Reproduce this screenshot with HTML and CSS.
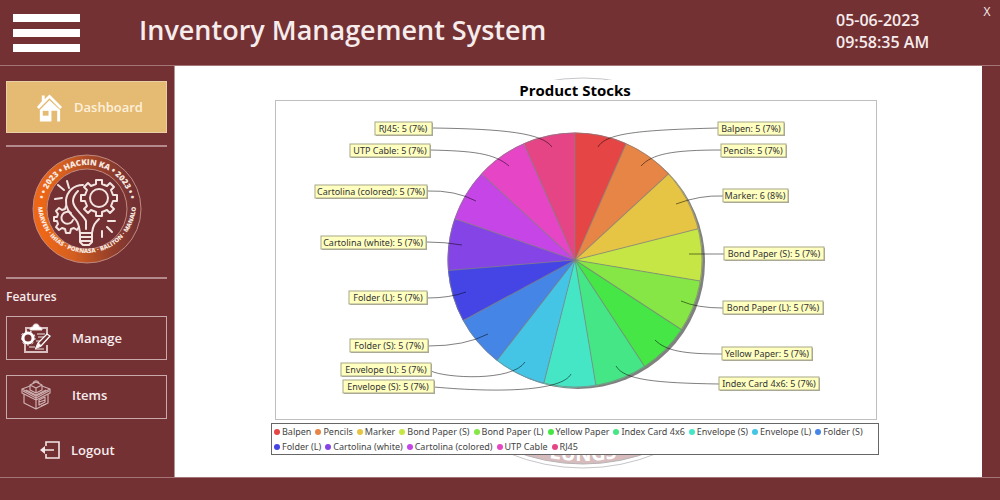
FILE: index.html
```
<!DOCTYPE html>
<html lang="en">
<head>
<meta charset="utf-8">
<meta name="viewport" content="width=device-width, initial-scale=1">
<title>Inventory Management System</title>
<link rel="stylesheet" href="styles.css">
</head>
<body>
<div class="app">
  <header class="topbar">
    <button class="menu-toggle" type="button" aria-label="Toggle menu"><span class="bar"></span><span class="bar"></span><span class="bar"></span></button>
    <h1 class="app-title">Inventory Management System</h1>
    <div class="clock"><span>05-06-2023</span><span>09:58:35 AM</span></div>
    <button class="close" type="button" aria-label="Close">X</button>
  </header>

  <nav class="sidebar">
    <button class="nav-item nav-active" type="button">
      <svg class="icon-home" viewBox="0 0 28 30" aria-hidden="true">
        <path d="M6 9V3h3v4l5-5 13 13-2 2L14 6 3 17l-2-2z" fill="#fff"/>
        <path d="M14 8l11 10v12h-3V19h-6v11H4V18z" fill="#fff"/>
        <path d="M7 19h6v5H7z" fill="#e5bb73"/>
      </svg>
      <span>Dashboard</span>
    </button>
    <hr class="rule">
    <svg class="logo" viewBox="0 0 110 110" role="img" aria-label="Hackin Ka 2023">
      <defs>
        <linearGradient id="ring" x1="0" x2="1" y1="0.5" y2="0.4">
          <stop offset="0" stop-color="#ee6716"/>
          <stop offset="0.3" stop-color="#d45f20"/>
          <stop offset="0.65" stop-color="#9d4329"/>
          <stop offset="1" stop-color="#733134"/>
        </linearGradient>
        <path id="arc-top" d="M11 55a44 44 0 0 1 88 0"/>
        <path id="arc-bottom" d="M6 50a49 49 0 0 0 98 0"/>
      </defs>
      <circle cx="55" cy="55" r="47" fill="none" stroke="url(#ring)" stroke-width="14"/>
      <circle cx="55" cy="55" r="54" fill="none" stroke="#c08a80" stroke-width="1"/>
      <circle cx="55" cy="55" r="40" fill="none" stroke="#c08a80" stroke-width="1"/>
      <text class="logo-text"><textPath href="#arc-top" startOffset="50%" text-anchor="middle">• • 2023 • HACKIN KA • 2023 • •</textPath></text>
      <text class="logo-text logo-names"><textPath href="#arc-bottom" startOffset="50%" text-anchor="middle">MARVEN · IHIAS · PORNASA · BALITON · MANALO</textPath></text>
      <g fill="none" stroke="#f3e4e2" stroke-width="2" stroke-linejoin="round" stroke-linecap="round">
        <path d="M51 31C41 31 35 38 34 46c-1 10 6 15 10 20 3 4 3 7 4 13h12c1-8 3-10 7-14M54 75v-8c-3-7-13-12-13-20 0-5 3-8 5-10"/>
        <path d="M48 79v9l3 3h6l3-3v-9M48 83h12M49 87h10"/>
        <circle cx="67" cy="44" r="9"/>
        <path d="M64 30v-4h6v4l5 2 3-3 4 4-3 3 2 5h4v6h-4l-2 5 3 3-4 4-3-3-5 2v4h-6v-4l-5-2-3 3-4-4 3-3-2-5h-4v-6h4l2-5-3-3 4-4 3 3z"/>
        <path d="M39 59a6 6 0 1 0 2 7"/>
        <path d="M34 52l-1 3-3 1-3-2-3 3 2 3-1 3h-3v4h3l1 3-2 3 3 3 3-2 3 1 1 4h4l1-4 3-1 3 2 2-3"/>
        <path d="M37 34l-2-7M32 36l-6-5M30 44l-7 1M70 77v6M75 73l5 5M76 67h7"/>
      </g>
    </svg>
    <hr class="rule">
    <h2 class="section-label">Features</h2>
    <button class="nav-item nav-boxed" type="button">
      <svg class="icon-feature" viewBox="0 0 30 30" aria-hidden="true" fill="none" stroke="#f3e6e6">
        <path d="M5 9V5h21v8M26 22v7H4v-9" stroke="#d9bfc0" stroke-width="2"/>
        <path d="M9 7c0-3 2-3 3-3 0-2 1-3 3-3s3 1 3 3c1 0 3 0 3 3z" fill="#fff"/>
        <path d="M16 11h8M17 14h6M15 18h4M14 26h9M8 24h6" stroke-width="1"/>
        <circle cx="7" cy="15" r="5" stroke="#fff" stroke-width="3"/>
        <circle cx="7" cy="15" r="7" stroke="#fff" stroke-width="1" stroke-dasharray="2 3"/>
        <path d="M15 25l2-5L26 11l3 2-9 10zM17 20l3 3" fill="#733134" stroke="#fff" stroke-width="1.3"/>
        <path d="M15 25l2-5 3 3z" fill="#fff"/>
      </svg>
      <span>Manage</span>
    </button>
    <button class="nav-item nav-boxed nav-second" type="button">
      <svg class="icon-feature" viewBox="0 0 30 30" aria-hidden="true" fill="none" stroke="#cfb0b1" stroke-width="1.2" stroke-linejoin="round">
        <path d="M9 6L1 9l14 7 14-7-8-3M1 9v4l14 7 14-7V9M15 16v4M3 14v9l12 6 12-6v-9M15 20v9"/>
        <path d="M9 5l6-3 6 3v5l-6 3-6-3zM9 5l6 3 6-3M15 8v5M12 3c1-3 5-3 6 0M5 10l10 5 10-5M2 11l13 7 13-7"/>
        <path d="M18 20l6-3v5l-6 3zM20 26l5-2M18 22l6-2"/>
      </svg>
      <span>Items</span>
    </button>
    <button class="nav-item nav-plain" type="button">
      <svg class="icon-logout" viewBox="0 0 20 20" aria-hidden="true" fill="none" stroke="#f3e6e6" stroke-width="1.6">
        <path d="M6 6V2h13v16H6v-4M2 10h12"/>
        <path d="M5 6l-5 4 5 4z" fill="#f3e6e6" stroke="none"/>
      </svg>
      <span>Logout</span>
    </button>
  </nav>

  <main class="content">
    <svg class="watermark" viewBox="0 0 392 392" aria-hidden="true">
      <defs><path id="seal-arc" d="M8 196a188 188 0 0 0 376 0"/></defs>
      <circle cx="196" cy="196" r="195" fill="#fff" stroke="#c6c6ca" stroke-width="1"/>
      <circle cx="196" cy="196" r="191" fill="#d6bcbd" stroke="#b9b3b6" stroke-width="1"/>
      <text class="seal-text"><textPath href="#seal-arc" startOffset="50%" text-anchor="middle">LUNGS</textPath></text>
    </svg>
    <section class="report">
      <h2 class="report-title">Product Stocks</h2>
      <div class="plot">
        <svg class="pie" viewBox="276 101 600 318" role="img" aria-label="Product stocks pie chart">
          <circle cx="578" cy="262" r="127" fill="#808080"/>
          <g class="slices">
            <circle class="slice" cx="575" cy="260" r="64" pathLength="76" stroke="#e64545" stroke-dasharray="5 71"/>
            <circle class="slice" cx="575" cy="260" r="64" pathLength="76" stroke="#e68545" stroke-dasharray="5 71" stroke-dashoffset="-5"/>
            <circle class="slice" cx="575" cy="260" r="64" pathLength="76" stroke="#e6c545" stroke-dasharray="6 70" stroke-dashoffset="-10"/>
            <circle class="slice" cx="575" cy="260" r="64" pathLength="76" stroke="#c5e645" stroke-dasharray="5 71" stroke-dashoffset="-16"/>
            <circle class="slice" cx="575" cy="260" r="64" pathLength="76" stroke="#85e645" stroke-dasharray="5 71" stroke-dashoffset="-21"/>
            <circle class="slice" cx="575" cy="260" r="64" pathLength="76" stroke="#45e645" stroke-dasharray="5 71" stroke-dashoffset="-26"/>
            <circle class="slice" cx="575" cy="260" r="64" pathLength="76" stroke="#45e685" stroke-dasharray="5 71" stroke-dashoffset="-31"/>
            <circle class="slice" cx="575" cy="260" r="64" pathLength="76" stroke="#45e6c5" stroke-dasharray="5 71" stroke-dashoffset="-36"/>
            <circle class="slice" cx="575" cy="260" r="64" pathLength="76" stroke="#45c5e6" stroke-dasharray="5 71" stroke-dashoffset="-41"/>
            <circle class="slice" cx="575" cy="260" r="64" pathLength="76" stroke="#4585e6" stroke-dasharray="5 71" stroke-dashoffset="-46"/>
            <circle class="slice" cx="575" cy="260" r="64" pathLength="76" stroke="#4545e6" stroke-dasharray="5 71" stroke-dashoffset="-51"/>
            <circle class="slice" cx="575" cy="260" r="64" pathLength="76" stroke="#8545e6" stroke-dasharray="5 71" stroke-dashoffset="-56"/>
            <circle class="slice" cx="575" cy="260" r="64" pathLength="76" stroke="#c545e6" stroke-dasharray="5 71" stroke-dashoffset="-61"/>
            <circle class="slice" cx="575" cy="260" r="64" pathLength="76" stroke="#e645c5" stroke-dasharray="5 71" stroke-dashoffset="-66"/>
            <circle class="slice" cx="575" cy="260" r="64" pathLength="76" stroke="#e64585" stroke-dasharray="5 71" stroke-dashoffset="-71"/>
          </g>
          <g class="edges">
            <circle cx="575" cy="260" r="127"/>
            <path d="M575 260V133"/>
            <path d="M575 260V133" transform="rotate(23.68 575 260)"/>
            <path d="M575 260V133" transform="rotate(47.37 575 260)"/>
            <path d="M575 260V133" transform="rotate(75.79 575 260)"/>
            <path d="M575 260V133" transform="rotate(99.47 575 260)"/>
            <path d="M575 260V133" transform="rotate(123.16 575 260)"/>
            <path d="M575 260V133" transform="rotate(146.84 575 260)"/>
            <path d="M575 260V133" transform="rotate(170.53 575 260)"/>
            <path d="M575 260V133" transform="rotate(194.21 575 260)"/>
            <path d="M575 260V133" transform="rotate(217.89 575 260)"/>
            <path d="M575 260V133" transform="rotate(241.58 575 260)"/>
            <path d="M575 260V133" transform="rotate(265.26 575 260)"/>
            <path d="M575 260V133" transform="rotate(288.95 575 260)"/>
            <path d="M575 260V133" transform="rotate(312.63 575 260)"/>
            <path d="M575 260V133" transform="rotate(336.32 575 260)"/>
          </g>
          <g class="links">
            <path d="M598 147C606 133 640 130 718 128"/>
            <path d="M641 166C652 154 672 150 721 150"/>
            <path d="M676 204Q700 195 723 196"/>
            <path d="M689 254H724"/>
            <path d="M681 301Q697 308 723 308"/>
            <path d="M655 340C666 351 684 354 722 354"/>
            <path d="M616 366C624 380 656 383 719 384"/>
            <path d="M571 374C562 391 500 393 434 387"/>
            <path d="M525 362C512 382 445 378 431 371"/>
            <path d="M488 334Q465 346 428 346"/>
            <path d="M466 292Q450 298 427 298"/>
            <path d="M462 245Q445 242 427 242"/>
            <path d="M476 201Q455 190 427 191"/>
            <path d="M509 166C494 153 472 151 430 150"/>
            <path d="M552 147C542 133 504 129 433 128"/>
          </g>
          <g class="tag-shadows">
            <rect x="719" y="123" width="66" height="13"/><rect x="722" y="145" width="65" height="13"/><rect x="724" y="190" width="65" height="13"/><rect x="725" y="248" width="100" height="13"/><rect x="724" y="302" width="100" height="13"/><rect x="723" y="348" width="90" height="13"/><rect x="720" y="378" width="100" height="13"/>
            <rect x="376" y="123" width="57" height="13"/><rect x="351" y="145" width="80" height="13"/><rect x="316" y="186" width="112" height="13"/><rect x="322" y="237" width="105" height="13"/><rect x="350" y="292" width="78" height="13"/><rect x="351" y="340" width="78" height="13"/><rect x="342" y="364" width="90" height="13"/><rect x="344" y="381" width="91" height="13"/>
          </g>
          <g class="tags">
            <rect x="718" y="122" width="66" height="13"/><rect x="721" y="144" width="65" height="13"/><rect x="723" y="189" width="65" height="13"/><rect x="724" y="247" width="100" height="13"/><rect x="723" y="301" width="100" height="13"/><rect x="722" y="347" width="90" height="13"/><rect x="719" y="377" width="100" height="13"/>
            <rect x="375" y="122" width="57" height="13"/><rect x="350" y="144" width="80" height="13"/><rect x="315" y="185" width="112" height="13"/><rect x="321" y="236" width="105" height="13"/><rect x="349" y="291" width="78" height="13"/><rect x="350" y="339" width="78" height="13"/><rect x="341" y="363" width="90" height="13"/><rect x="343" y="380" width="91" height="13"/>
          </g>
          <g class="tag-text">
            <text x="751" y="132">Balpen: 5 (7%)</text>
            <text x="753" y="154">Pencils: 5 (7%)</text>
            <text x="755" y="199">Marker: 6 (8%)</text>
            <text x="774" y="257">Bond Paper (S): 5 (7%)</text>
            <text x="773" y="311">Bond Paper (L): 5 (7%)</text>
            <text x="767" y="357">Yellow Paper: 5 (7%)</text>
            <text x="769" y="387">Index Card 4x6: 5 (7%)</text>
            <text x="403" y="132">RJ45: 5 (7%)</text>
            <text x="390" y="154">UTP Cable: 5 (7%)</text>
            <text x="371" y="195">Cartolina (colored): 5 (7%)</text>
            <text x="373" y="246">Cartolina (white): 5 (7%)</text>
            <text x="388" y="301">Folder (L): 5 (7%)</text>
            <text x="389" y="349">Folder (S): 5 (7%)</text>
            <text x="386" y="373">Envelope (L): 5 (7%)</text>
            <text x="388" y="390">Envelope (S): 5 (7%)</text>
          </g>
        </svg>
      </div>
      <ul class="legend">
        <li class="key red">Balpen</li>
        <li class="key orange">Pencils</li>
        <li class="key amber">Marker</li>
        <li class="key lime">Bond Paper (S)</li>
        <li class="key leaf">Bond Paper (L)</li>
        <li class="key green">Yellow Paper</li>
        <li class="key mint">Index Card 4x6</li>
        <li class="key teal">Envelope (S)</li>
        <li class="key sky">Envelope (L)</li>
        <li class="key azure">Folder (S)</li>
        <li class="key blue">Folder (L)</li>
        <li class="key violet">Cartolina (white)</li>
        <li class="key purple">Cartolina (colored)</li>
        <li class="key pink">UTP Cable</li>
        <li class="key rose">RJ45</li>
      </ul>
    </section>
  </main>
  <footer class="bottombar"></footer>
</div>
</body>
</html>
```
FILE: styles.css
```
* { box-sizing: border-box; }

body {
  margin: 0;
  background: #733134;
  color: #f6ecec;
  font-family: "Open Sans", "Noto Sans", sans-serif;
}

button {
  padding: 0;
  border: 0;
  background: none;
  color: inherit;
  font: inherit;
  cursor: pointer;
}

.app {
  display: grid;
  grid-template: auto 1fr 23px / 175px 1fr 18px;
  min-height: 100vh;
}

.topbar {
  grid-column: 1 / -1;
  display: flex;
  align-items: flex-start;
  height: 66px;
  padding-left: 13px;
  border-bottom: 1px solid #a47476;
}

.menu-toggle {
  display: grid;
  gap: 7px;
  width: 67px;
  padding-top: 14px;
}

.bar {
  height: 8px;
  background: #fff;
}

.app-title {
  flex: 1;
  margin: 0 0 0 59px;
  padding-top: 12px;
  font-size: 27px;
  line-height: 36px;
  font-weight: 600;
}

.clock {
  display: grid;
  width: 146px;
  padding-top: 9px;
  font-size: 16px;
  line-height: 22px;
  font-weight: 600;
}

.close {
  width: 18px;
  padding: 4px 8px 0 0;
  font-size: 12px;
  line-height: 16px;
}

.sidebar {
  display: flex;
  flex-direction: column;
  padding: 15px 7px 0 6px;
  border-right: 1px solid #b89394;
  font-size: 13px;
  line-height: 18px;
  font-weight: 600;
}

.nav-item {
  display: flex;
  align-items: center;
  text-align: left;
}

.nav-active {
  height: 52px;
  gap: 11px;
  padding-left: 29px;
  border: 1px solid #e9cfa6;
  background: #e5bb73;
  color: #fdf0da;
}

.icon-home { width: 27px; height: 30px; }

.rule {
  width: 100%;
  height: 2px;
  margin: 12px 0 0;
  border: 0;
  background: #b48a8c;
}

.logo {
  align-self: center;
  width: 110px;
  height: 110px;
  margin: 7px 0 1px;
}

.logo-text {
  fill: #f8e9e0;
  font-family: "Open Sans", sans-serif;
  font-size: 8px;
  font-weight: 800;
}

.logo-names { font-size: 6px; }

.section-label {
  margin: 9px 0 10px;
  font-size: 12px;
  line-height: 18px;
  font-weight: 600;
}

.nav-boxed {
  height: 44px;
  gap: 21px;
  padding-left: 14px;
  border: 1px solid #c9a9aa;
}

.nav-second {
  margin-top: 15px;
  padding-bottom: 5px;
}

.icon-feature { width: 30px; height: 30px; }

.nav-plain {
  height: 20px;
  gap: 11px;
  margin-top: 21px;
  padding-left: 34px;
}

.icon-logout { width: 20px; height: 20px; }

.content {
  position: relative;
  padding: 14px 103px 20px 96px;
  overflow: hidden;
  background: #fff;
  color: #000;
}

/* Seal showing from behind the report panel */
.watermark {
  position: absolute;
  top: 11px;
  left: 212px;
  width: 392px;
}

.seal-text {
  fill: #fff;
  font-size: 20px;
  font-weight: 700;
}

.report {
  position: relative;
  background: #fff;
}

.report-title {
  margin: 0;
  font-size: 15px;
  line-height: 20px;
  font-weight: 700;
  text-align: center;
}

.plot {
  margin: 0 2px 3px 4px;
  border: 1px solid #bfbfbf;
}

.pie {
  display: block;
  width: 100%;
}

.slices { transform: rotate(-90deg); transform-origin: 575px 260px; }
.slice { fill: none; stroke-width: 127px; }
.edges { fill: none; stroke: #808080; stroke-opacity: 0.7; stroke-width: 1px; }
.links { fill: none; stroke: #000; stroke-opacity: 0.5; stroke-width: 1px; }
.tag-shadows { fill: #a9a9a0; }
.tags { fill: #ffffc0; stroke: #a8a888; stroke-width: 1px; }

.tag-text {
  fill: #333;
  font-family: "Noto Sans", sans-serif;
  font-size: 9px;
  text-anchor: middle;
}

.legend {
  display: flex;
  flex-wrap: wrap;
  gap: 0 4px;
  margin: 0;
  padding: 0 2px;
  border: 1px solid #666;
  background: #fff;
  color: #444;
  font-family: "Noto Sans", sans-serif;
  font-size: 9px;
  line-height: 15px;
  list-style: none;
}

.key {
  display: flex;
  align-items: center;
  gap: 2px;
  white-space: nowrap;
}

.key::before {
  width: 6px;
  height: 6px;
  border-radius: 50%;
  background: currentColor;
  content: "";
}

.red::before { background: #e64545; }
.orange::before { background: #e68545; }
.amber::before { background: #e6c545; }
.lime::before { background: #c5e645; }
.leaf::before { background: #85e645; }
.green::before { background: #45e645; }
.mint::before { background: #45e685; }
.teal::before { background: #45e6c5; }
.sky::before { background: #45c5e6; }
.azure::before { background: #4585e6; }
.blue::before { background: #4545e6; }
.violet::before { background: #8545e6; }
.purple::before { background: #c545e6; }
.pink::before { background: #e645c5; }
.rose::before { background: #e64585; }

.bottombar {
  grid-column: 1 / -1;
  border-top: 1px solid #a47476;
}
```
